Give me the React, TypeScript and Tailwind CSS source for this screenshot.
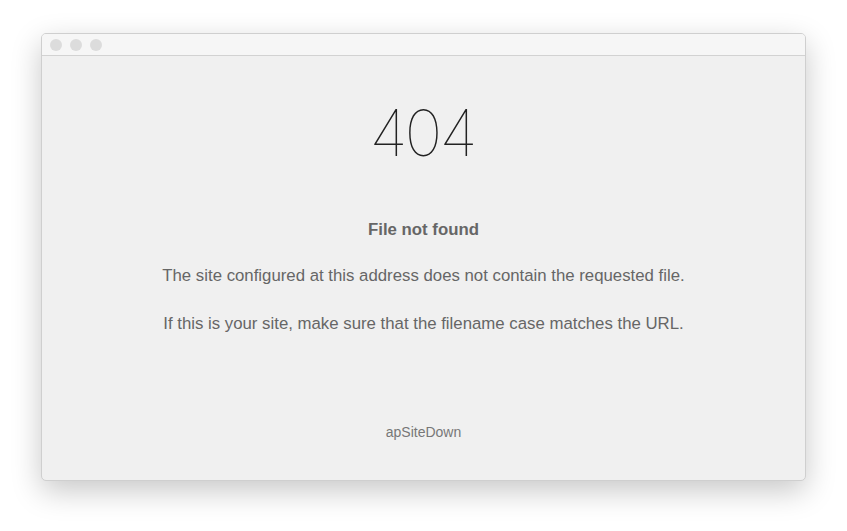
export default function App() {
  return (
    <div className="w-[847px] h-[531px] bg-white flex items-start justify-center pt-[33px] font-['Liberation_Sans',Arial,sans-serif]">
      <div className="w-[765px] h-[448px] rounded-[5px] bg-[#f0f0f0] border border-[#cfcfcf] shadow-[0_10px_30px_rgba(0,0,0,0.22)] flex flex-col overflow-hidden">
        <div className="h-[22px] bg-[#f6f6f6] border-b border-[#d2d2d2] flex items-center gap-2 pl-[8px] shrink-0">
          <span className="w-3 h-3 rounded-full bg-[#dcdcdc]" />
          <span className="w-3 h-3 rounded-full bg-[#dcdcdc]" />
          <span className="w-3 h-3 rounded-full bg-[#dcdcdc]" />
        </div>
        <div className="flex-1 flex flex-col items-center text-[#666]">
          <div className="mt-[45px] text-[64px] leading-[64px] font-thin text-[#222] font-['Inter',sans-serif] tracking-[-3px] pr-[3px]">404</div>
          <div className="mt-[53px] text-[16.8px] leading-[24px] font-bold">File not found</div>
          <p className="mt-[22px] text-[16.8px] leading-[24px]">The site configured at this address does not contain the requested file.</p>
          <p className="mt-[24px] text-[16.8px] leading-[24px]">If this is your site, make sure that the filename case matches the URL.</p>
          <div className="mt-[86px] text-[14px] leading-[20px] text-[#777]">apSiteDown</div>
        </div>
      </div>
    </div>
  );
}
